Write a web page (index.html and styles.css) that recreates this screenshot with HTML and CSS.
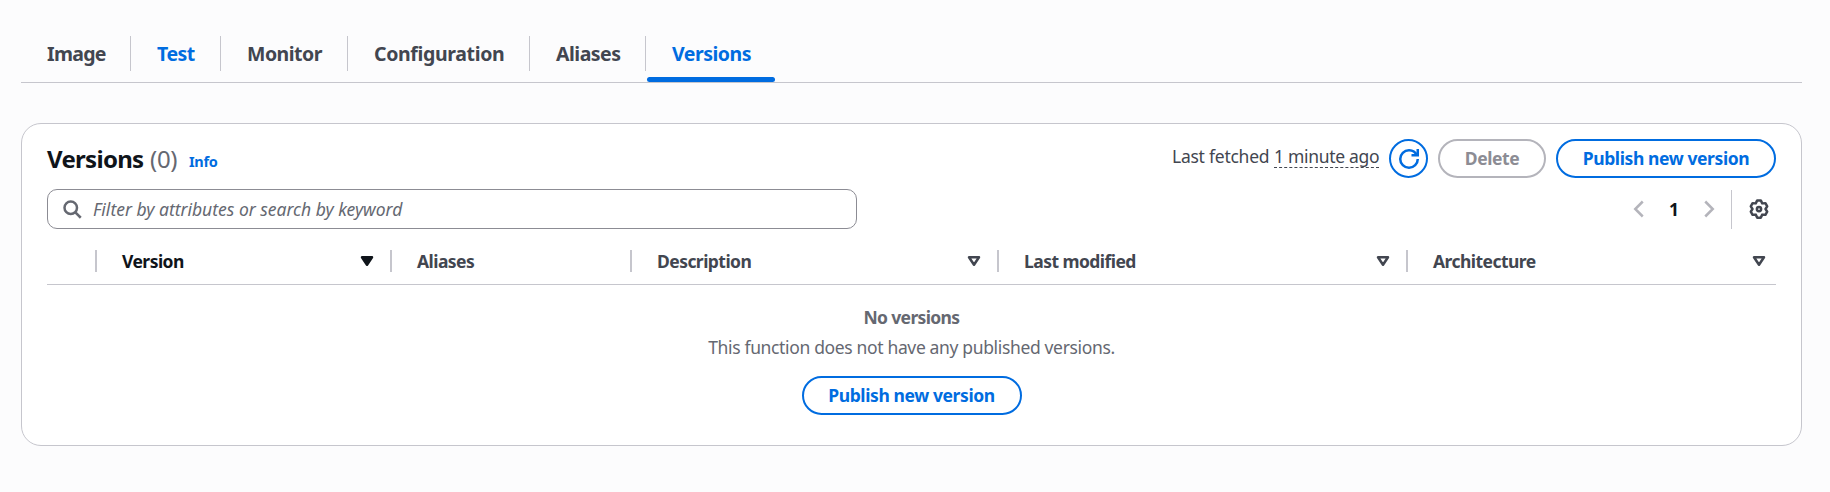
FILE: index.html
```html
<!DOCTYPE html>
<html lang="en">
<head>
<meta charset="utf-8">
<title>Versions</title>
<link rel="stylesheet" href="styles.css">
</head>
<body>
<nav class="tabs">
  <a class="tab tab-image"><span>Image</span></a>
  <a class="tab tab-test"><span>Test</span></a>
  <a class="tab tab-monitor"><span>Monitor</span></a>
  <a class="tab tab-config"><span>Configuration</span></a>
  <a class="tab tab-aliases"><span>Aliases</span></a>
  <a class="tab tab-versions"><span>Versions</span></a>
</nav>
<main class="card">
  <header class="header">
    <h2 class="title">Versions</h2><span class="count">(0)</span><a class="info">Info</a>
    <div class="actions">
      <span class="fetched">Last fetched</span><span class="ago">1 minute ago</span>
      <button class="btn round" aria-label="Refresh"><svg width="20" height="20" viewBox="0 0 16 16" fill="none" stroke="currentColor" stroke-width="2"><path d="M10 5h5V0"/><path d="M15 8a6.957 6.957 0 0 1-7 7 6.957 6.957 0 0 1-7-7 6.957 6.957 0 0 1 7-7 6.870 6.870 0 0 1 6.300 4"/></svg></button>
      <button class="btn delete" disabled><span>Delete</span></button>
      <button class="btn publish"><span>Publish new version</span></button>
    </div>
  </header>
  <div class="tools">
    <div class="search">
      <svg width="20" height="20" viewBox="0 0 16 16" fill="none" stroke="currentColor" stroke-width="2"><circle cx="7" cy="7" r="5"/><path d="m15 15-4.500-4.500"/></svg>
      <span class="placeholder">Filter by attributes or search by keyword</span>
    </div>
    <div class="pager">
      <svg class="chev" width="20" height="20" viewBox="0 0 16 16" fill="none" stroke="currentColor" stroke-width="2"><path d="M11 2 5 8l6 6"/></svg>
      <b class="page">1</b>
      <svg class="chev" width="20" height="20" viewBox="0 0 16 16" fill="none" stroke="currentColor" stroke-width="2"><path d="m5 2 6 6-6 6"/></svg>
      <i class="rule"></i>
      <svg class="gear" width="20" height="20" viewBox="0 0 16 16" fill="none" stroke="currentColor" stroke-width="2" stroke-linejoin="round"><path d="M6.570 1.100H9.430L10.600 3.500 13.130 3.380 14.560 5.870 13.200 8 14.560 10.130 13.130 12.620 10.600 12.500 9.430 14.900H6.570L5.400 12.500 2.870 12.620 1.440 10.130 2.800 8 1.440 5.870 2.870 3.380 5.400 3.500Z"/><circle cx="8" cy="8" r="1.700"/></svg>
    </div>
  </div>
  <div class="thead">
    <div class="th"></div>
    <div class="th sorted"><span>Version</span><svg width="20" height="20" viewBox="0 0 16 16" fill="currentColor" stroke="currentColor" stroke-width="2" stroke-linejoin="round"><path d="M4 5h8l-4 6z"/></svg></div>
    <div class="th"><span>Aliases</span></div>
    <div class="th"><span>Description</span><svg width="20" height="20" viewBox="0 0 16 16" fill="none" stroke="currentColor" stroke-width="2" stroke-linejoin="round"><path d="M4 5h8l-4 6z"/></svg></div>
    <div class="th"><span>Last modified</span><svg width="20" height="20" viewBox="0 0 16 16" fill="none" stroke="currentColor" stroke-width="2" stroke-linejoin="round"><path d="M4 5h8l-4 6z"/></svg></div>
    <div class="th"><span>Architecture</span><svg width="20" height="20" viewBox="0 0 16 16" fill="none" stroke="currentColor" stroke-width="2" stroke-linejoin="round"><path d="M4 5h8l-4 6z"/></svg></div>
  </div>
  <section class="empty">
    <b class="none">No versions</b>
    <p class="desc">This function does not have any published versions.</p>
    <button class="btn publish"><span>Publish new version</span></button>
  </section>
</main>
</body>
</html>
```
FILE: styles.css
```css
* { box-sizing: border-box; }
body { margin: 0; height: 492px; padding: 36px 28px 0 21px; background: #fcfcfd; color: #424650; font: 17.5px/25px "Noto Sans", "Open Sans", sans-serif; overflow: hidden; }
svg { display: block; flex: none; }
span, b, a, h2, p { white-space: nowrap; }

.tabs { display: flex; height: 47px; border-bottom: 1px solid #c6c6cd; }
.tab { position: relative; height: 35px; padding-left: 26px; border-right: 1px solid #c6c6cd; font-size: 19.5px; font-weight: 700; line-height: 35px; letter-spacing: -0.5px; }
.tab-image { width: 110px; letter-spacing: -0.7px; }
.tab-test { width: 90px; color: #006ce0; }
.tab-monitor { width: 127px; }
.tab-config { width: 182px; letter-spacing: -0.35px; }
.tab-aliases { width: 116px; }
.tab-versions { width: 130px; border: 0; color: #006ce0; }
.tab-versions::after { content: ""; position: absolute; left: 1px; width: 128px; top: 41px; height: 5px; border-radius: 3px; background: #006ce0; }

.card { height: 323px; margin-top: 40px; padding: 15px 25px 0; border: 1px solid #c6c6cd; border-radius: 20px; background: #fff; }
.header { display: flex; height: 39px; align-items: center; }
.title { width: 103px; margin: 0; padding-bottom: 1px; color: #0f141a; font-size: 24px; font-weight: 700; letter-spacing: -0.7px; }
.count { width: 39px; padding-bottom: 1px; color: #656871; font-size: 24px; letter-spacing: -0.3px; }
.info { padding-top: 5px; color: #006ce0; font-size: 14.5px; font-weight: 700; letter-spacing: -0.3px; }
.actions { display: flex; align-items: center; margin-left: auto; }
.fetched { width: 102px; padding-bottom: 4px; letter-spacing: -0.25px; }
.ago { width: 105px; height: 22px; margin: -4px 10px 0 0; border-bottom: 1px dashed #424650; line-height: 21px; letter-spacing: -0.3px; }
.btn { display: flex; height: 39px; padding: 0; align-items: center; justify-content: center; border: 2px solid #006ce0; border-radius: 20px; background: #fff; color: #006ce0; font: inherit; font-weight: 700; letter-spacing: -0.4px; }
.round { width: 39px; margin-right: 10px; }
.delete { width: 108px; margin-right: 10px; border-color: #b4b4bb; color: #8c8c94; }
.publish { width: 220px; }

.tools { display: flex; height: 40px; margin-top: 11px; justify-content: space-between; }
.search { display: flex; width: 810px; align-items: center; gap: 11px; padding-left: 14px; border: 1px solid #8c8c94; border-radius: 10px; color: #656871; }
.placeholder { font-style: italic; }
.pager { display: flex; align-items: center; }
.chev { color: #b4b4bb; }
.page { width: 50px; color: #0f141a; text-align: center; }
.rule { width: 1px; height: 39px; margin: 0 18px 0 12px; background: #c6c6cd; }
.gear { margin-right: 7px; }
.chev, .page { margin-left: 1px; margin-right: -1px; }
.rule { margin-left: 13px; margin-right: 17px; }

.thead { display: grid; height: 56px; padding-top: 8px; grid-template-columns: 48px 295px 240px 367px 409px 1fr; align-items: center; border-bottom: 1px solid #c6c6cd; font-weight: 700; letter-spacing: -0.55px; }
.th { display: flex; height: 22px; align-items: center; justify-content: space-between; padding: 0 13px 0 25px; border-left: 2px solid #c6c6cd; }
.th:first-child { border: 0; }
.th:last-child { padding-right: 7px; }
.th span { line-height: 22px; }
.sorted { color: #0f141a; }

.empty { display: flex; flex-direction: column; align-items: center; padding-top: 19px; color: #656871; }
.none { line-height: 26px; letter-spacing: -0.65px; }
.desc { margin: 4px 0 16px; line-height: 26px; letter-spacing: -0.35px; }
```
